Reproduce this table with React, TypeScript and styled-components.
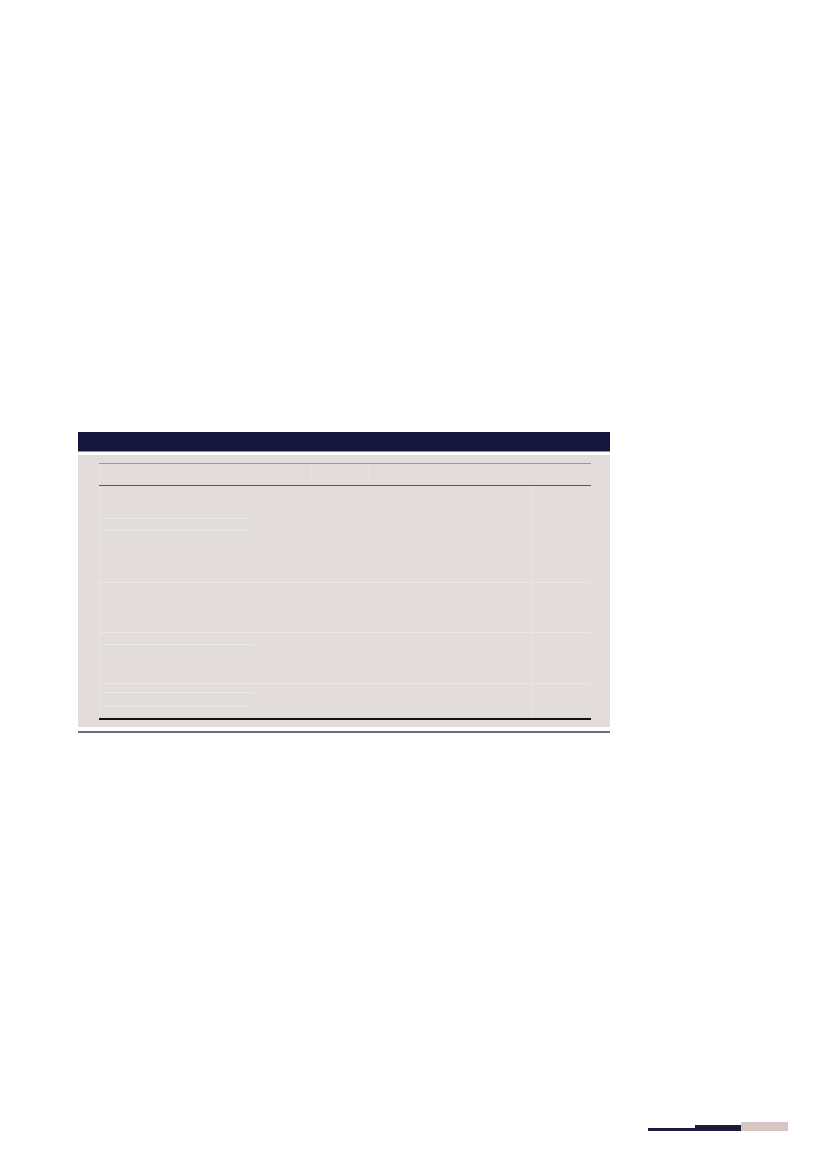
import React from "react";
import styled, { createGlobalStyle } from "styled-components";

const GlobalStyle = createGlobalStyle`
  html, body {
    margin: 0;
    padding: 0;
    background: #ffffff;
    font-family: "Liberation Sans", Arial, sans-serif;
  }
`;

const Page = styled.div`
  width: 827px;
  height: 1169px;
  display: flex;
  flex-direction: column;
  box-sizing: border-box;
  padding-top: 432px;
`;

const Figure = styled.section`
  margin-left: 78px;
  width: 532px;
  display: flex;
  flex-direction: column;
`;

const HeaderBar = styled.div`
  height: 19px;
  background: #15163b;
  border-bottom: 1px solid #8a8aa0;
`;

const Panel = styled.div`
  margin-top: 3px;
  background: #e2dcda;
  padding: 8px 19px 7px 21px;
`;

const BottomRule = styled.div`
  margin-top: 4px;
  height: 2px;
  background: #6a6a80;
`;

const Table = styled.div`
  display: flex;
  flex-direction: column;
  border-top: 1px solid #9d9897;
  border-bottom: 2px solid #111111;
`;

const columns = "155px 57px 57px 57px 57px 56px 53px";

const Row = styled.div<{ $h: number; $head?: boolean }>`
  display: grid;
  grid-template-columns: ${columns};
  height: ${(p) => p.$h}px;
  border-bottom: 1px solid ${(p) => (p.$head ? "#5a5656" : "#ebe6e4")};
  box-sizing: border-box;

  &:last-child {
    border-bottom: none;
  }
`;

const Cell = styled.div<{ $divider?: boolean }>`
  position: relative;
  border-left: 1px solid ${(p) => (p.$divider ? "#e6e0de" : "transparent")};
  display: flex;
  flex-direction: column;
`;

const LabelCell = styled.div`
  display: flex;
  flex-direction: column;
  padding-left: 4px;
  border-left: 1px solid #e9e4e2;
`;

const SubLine = styled.div<{ $top: number; $w?: number }>`
  margin-top: ${(p) => p.$top}px;
  width: ${(p) => p.$w ?? 146}px;
  height: 1px;
  background: #ece8e6;
`;

const Gutter = styled.div`
  position: absolute;
  top: 0;
  bottom: 0;
  left: -7px;
  width: 1px;
  background: #e9e4e2;
`;

const Footer = styled.footer`
  margin-top: auto;
  padding: 0 39px 38px 0;
  display: flex;
  justify-content: flex-end;
  align-items: flex-end;
`;

const FooterSeg = styled.div<{ $w: number; $h: number; $c: string }>`
  width: ${(p) => p.$w}px;
  height: ${(p) => p.$h}px;
  background: ${(p) => p.$c};
`;

type BodyRow = { h: number; subs: { top: number; w?: number }[] };

const bodyRows: BodyRow[] = [
  { h: 97, subs: [{ top: 32 }, { top: 11 }] },
  { h: 50, subs: [] },
  { h: 51, subs: [{ top: 11, w: 150 }] },
  { h: 34, subs: [{ top: 8, w: 150 }, { top: 13 }] },
];

const DataCells = () => (
  <>
    {[0, 1, 2, 3, 4].map((i) => (
      <Cell key={i} />
    ))}
    <Cell $divider>
      <Gutter />
    </Cell>
  </>
);

export default function App() {
  return (
    <>
      <GlobalStyle />
      <Page>
        <Figure>
          <HeaderBar />
          <Panel>
            <Table>
              <Row $h={22} $head>
                <LabelCell />
                {[0, 1, 2, 3, 4, 5].map((i) => (
                  <Cell key={i} $divider />
                ))}
              </Row>
              {bodyRows.map((r, idx) => (
                <Row key={idx} $h={r.h}>
                  <LabelCell>
                    {r.subs.map((s, j) => (
                      <SubLine key={j} $top={s.top} $w={s.w} />
                    ))}
                  </LabelCell>
                  <DataCells />
                </Row>
              ))}
            </Table>
          </Panel>
          <BottomRule />
        </Figure>
        <Footer>
          <FooterSeg $w={47} $h={3} $c="#1b1a3a" />
          <FooterSeg $w={46} $h={6} $c="#1b1a3a" />
          <FooterSeg $w={47} $h={9} $c="#d5c6c3" />
        </Footer>
      </Page>
    </>
  );
}
